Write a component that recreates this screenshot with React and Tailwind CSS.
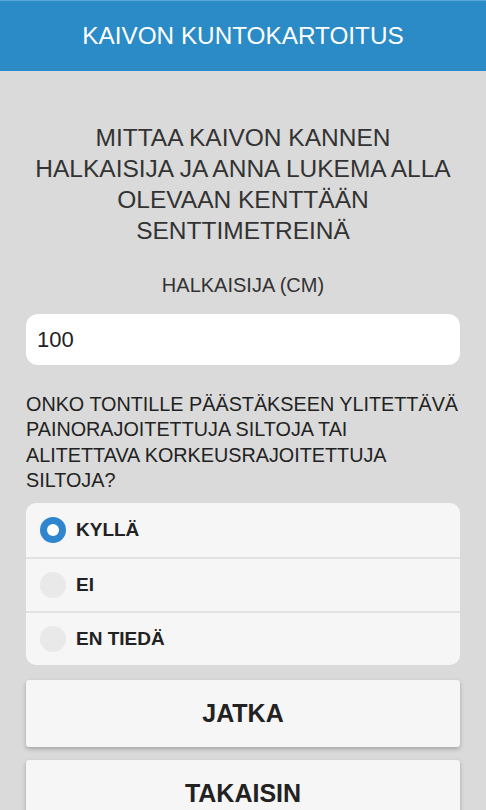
export default function App() {
  const options = [
    { label: 'KYLLÄ', checked: true },
    { label: 'EI', checked: false },
    { label: 'EN TIEDÄ', checked: false },
  ]

  return (
    <div className="min-h-[810px] bg-[#dadada] font-['Liberation_Sans',Arial,sans-serif]">
      {/* Header */}
      <div className="h-[71px] bg-[#2a8bc7] border-t border-[#5aa7d8] flex items-center justify-center">
        <h1 className="text-[24.3px] text-white">KAIVON KUNTOKARTOITUS</h1>
      </div>

      <div className="px-[26px] pt-[51px]">
        <p className="text-center text-[24.5px] leading-[31px] text-[#333] whitespace-nowrap">
          MITTAA KAIVON KANNEN<br />
          HALKAISIJA JA ANNA LUKEMA ALLA<br />
          OLEVAAN KENTTÄÄN<br />
          SENTTIMETREINÄ
        </p>

        <div className="mt-[27px] text-center text-[20px] leading-[24px] text-[#333]">HALKAISIJA (CM)</div>

        <input
          type="text"
          defaultValue="100"
          className="mt-[17px] w-full h-[51px] rounded-[12px] bg-white px-[11px] text-[22px] text-[#222] outline-none"
        />

        <p className="mt-[27px] text-[19.8px] leading-[25.3px] text-[#222] whitespace-nowrap">
          ONKO TONTILLE PÄÄSTÄKSEEN YLITETTÄVÄ<br />
          PAINORAJOITETTUJA SILTOJA TAI<br />
          ALITETTAVA KORKEUSRAJOITETTUJA<br />
          SILTOJA?
        </p>

        {/* Radio group */}
        <div className="mt-[10px] rounded-[10px] bg-[#f6f6f6] overflow-hidden">
          {options.map((o, i) => (
            <div
              key={o.label}
              className={`h-[54px] flex items-center px-[14px] gap-[10px] ${i > 0 ? 'border-t-2 border-[#e2e2e2]' : ''}`}
            >
              {o.checked ? (
                <span className="w-[26px] h-[26px] rounded-full bg-[#2f86cf] flex items-center justify-center">
                  <span className="w-[12px] h-[12px] rounded-full bg-white" />
                </span>
              ) : (
                <span className="w-[26px] h-[26px] rounded-full bg-[#e9e9e9]" />
              )}
              <span className="text-[19px] font-bold text-[#222]">{o.label}</span>
            </div>
          ))}
        </div>

        {/* Buttons */}
        <button className="mt-[15px] w-full h-[67px] rounded-[3px] bg-[#f6f6f6] shadow-[0_2px_4px_rgba(0,0,0,0.25)] text-[25px] font-bold text-[#222]">
          JATKA
        </button>
        <button className="mt-[13px] w-full h-[67px] rounded-[3px] bg-[#f6f6f6] shadow-[0_2px_4px_rgba(0,0,0,0.25)] text-[25px] font-bold text-[#222]">
          TAKAISIN
        </button>
      </div>
    </div>
  )
}
